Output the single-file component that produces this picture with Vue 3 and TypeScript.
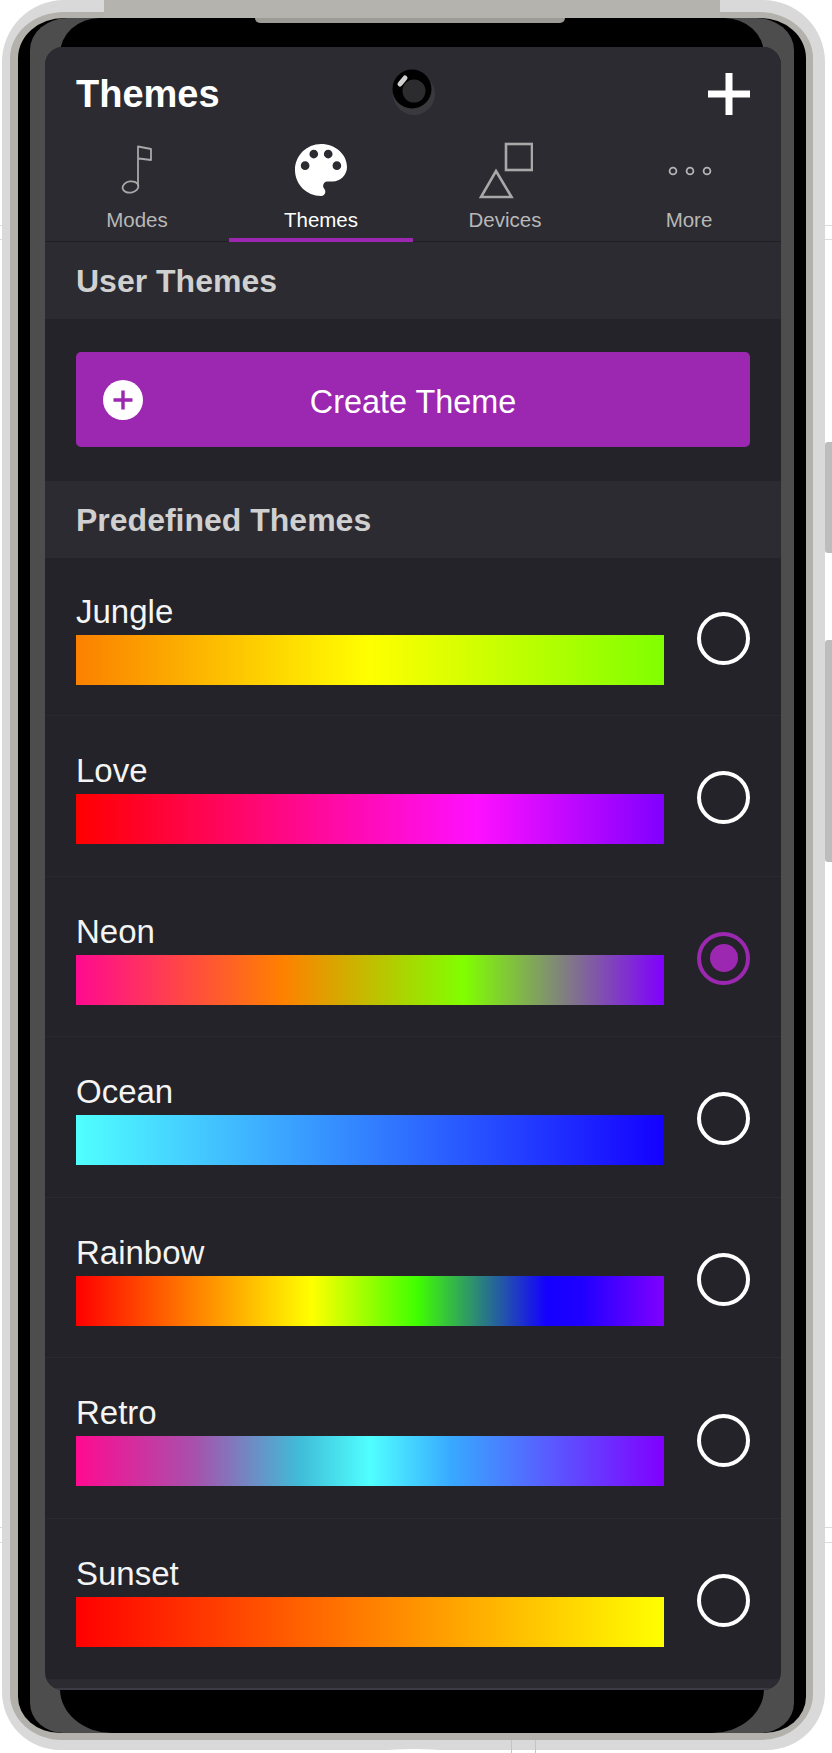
<script setup lang="ts">
interface Theme {
  name: string;
  gradient: string;
}

const tabs = ["Modes", "Themes", "Devices", "More"];
const activeTab = "Themes";
const selected = "Neon";

const themes: Theme[] = [
  { name: "Jungle", gradient: "linear-gradient(90deg, #fb8000, #ffff00 50%, #80ff00)" },
  { name: "Love", gradient: "linear-gradient(90deg, #ff0000, #ff10ff 68%, #8000ff)" },
  { name: "Neon", gradient: "linear-gradient(90deg, #ff0a90, #ff8000 35%, #80ff00 66%, #8000ff)" },
  { name: "Ocean", gradient: "linear-gradient(90deg, #50ffff, #1400ff)" },
  { name: "Rainbow", gradient: "linear-gradient(90deg, #ff0000, #ff8000 20%, #ffff00 40%, #40ff00 58%, #1400ff 80%, #1f00ff 86%, #8000ff)" },
  { name: "Retro", gradient: "linear-gradient(90deg, #ff0a90, #a850ac 20%, #40bcd8 38%, #50ffff 50%, #38a8ff 64%, #8000ff)" },
  { name: "Sunset", gradient: "linear-gradient(90deg, #ff0000, #ffff00)" },
];
</script>

<template>
  <div class="page">
    <i class="line" style="top: 225px"></i>
    <i class="line" style="top: 239px"></i>
    <i class="line" style="top: 1527px"></i>
    <i class="line" style="top: 1542px"></i>
    <i class="side-btn vol-up"></i>
    <i class="side-btn vol-down"></i>

    <div class="shell">
      <div class="band">
        <i class="top-bar"></i>
        <div class="bezel">
          <div class="rim">
            <i class="inner-black"></i>
            <main class="screen">
              <header class="top">
                <div class="title-row">
                  <h1>Themes</h1>
                  <svg class="add" width="42" height="42" viewBox="0 0 42 42">
                    <path d="M21 0V42M0 21H42" stroke="#fff" stroke-width="7" />
                  </svg>
                </div>
                <nav class="tabs">
                  <div v-for="tab in tabs" :key="tab" class="tab" :class="{ active: tab === activeTab }">
                    <div class="tab-icon">
                      <svg v-if="tab === 'Modes'" width="32" height="54" viewBox="0 0 32 54" fill="none" stroke="#a8a8a8" stroke-width="1.8">
                        <ellipse cx="9.5" cy="44" rx="8" ry="5.6" transform="rotate(-10 9.5 44)" />
                        <path d="M17 43V3.5L30 6V17L18 15.5" stroke-linejoin="round" />
                      </svg>
                      <svg v-else-if="tab === 'Themes'" width="52" height="52" viewBox="3 3 18 18" fill="#fff">
                        <path d="M12 3c-4.97 0-9 4.03-9 9s4.03 9 9 9c.83 0 1.5-.67 1.5-1.5 0-.39-.15-.74-.39-1.01-.23-.26-.38-.61-.38-.99 0-.83.67-1.5 1.5-1.5H16c2.76 0 5-2.24 5-5 0-4.42-4.03-8-9-8zm-5.5 9c-.83 0-1.5-.67-1.5-1.5S5.67 9 6.5 9 8 9.67 8 10.5 7.33 12 6.5 12zm3-4C8.67 8 8 7.33 8 6.5S8.67 5 9.5 5s1.5.67 1.5 1.5S10.33 8 9.5 8zm5 0c-.83 0-1.5-.67-1.5-1.5S13.67 5 14.5 5s1.5.67 1.5 1.5S15.33 8 14.5 8zm3 4c-.83 0-1.5-.67-1.5-1.5S16.67 9 17.5 9s1.5.67 1.5 1.5-.67 1.5-1.5 1.5z" />
                      </svg>
                      <svg v-else-if="tab === 'Devices'" width="56" height="58" viewBox="0 0 56 58" fill="none" stroke="#a8a8a8" stroke-width="2.6">
                        <rect x="29" y="3" width="26" height="26" />
                        <path d="M19 30L34.5 56H4Z" />
                      </svg>
                      <svg v-else class="dots" width="46" height="12" viewBox="0 0 46 12" fill="none" stroke="#b4b4b4" stroke-width="1.8">
                        <circle cx="6" cy="6" r="3.4" />
                        <circle cx="23" cy="6" r="3.4" />
                        <circle cx="40" cy="6" r="3.4" />
                      </svg>
                    </div>
                    <span>{{ tab }}</span>
                  </div>
                </nav>
              </header>

              <h2 class="section">User Themes</h2>
              <div class="create-wrap">
                <button class="create">
                  <svg width="40" height="40" viewBox="0 0 40 40">
                    <circle cx="20" cy="20" r="20" fill="#fff" />
                    <path d="M20 10.5V29.5M10.5 20H29.5" stroke="#9c27b0" stroke-width="3.4" />
                  </svg>
                  <span>Create Theme</span>
                </button>
              </div>

              <h2 class="section">Predefined Themes</h2>
              <ul class="themes">
                <li v-for="theme in themes" :key="theme.name">
                  <div class="info">
                    <span class="name">{{ theme.name }}</span>
                    <div class="bar" :style="{ background: theme.gradient }"></div>
                  </div>
                  <span class="radio" :class="{ on: theme.name === selected }"></span>
                </li>
              </ul>
              <footer class="strip"></footer>

              <svg class="camera" width="60" height="60" viewBox="0 0 60 60">
                <circle cx="32" cy="33" r="21" fill="#3a3a3e" />
                <circle cx="30" cy="28" r="19.5" fill="#000" />
                <circle cx="32" cy="30" r="11.5" fill="#2c2c2e" />
                <path d="M18 23L23 17" stroke="#d0d0d0" stroke-width="5" stroke-linecap="round" />
              </svg>
            </main>
          </div>
        </div>
        <i class="top-notch"></i>
      </div>
    </div>

    <i class="seam" style="left: 511px"></i>
    <i class="seam" style="left: 535px"></i>
    <i class="pill"></i>
  </div>
</template>

<style>
html,
body {
  margin: 0;
  background: #fff;
}
</style>

<style scoped>
.page {
  position: relative;
  width: 832px;
  height: 1753px;
  overflow: hidden;
  background: #fff;
  font-family: "Liberation Sans", Arial, sans-serif;
}

.line {
  position: absolute;
  left: 0;
  right: 0;
  height: 1px;
  background: #dcdcdc;
}

.side-btn {
  position: absolute;
  left: 825px;
  width: 7px;
  background: #bdbdbd;
  border-radius: 3px 0 0 3px;
}

.vol-up {
  top: 442px;
  height: 111px;
}

.vol-down {
  top: 640px;
  height: 222px;
}

.shell {
  position: relative;
  box-sizing: border-box;
  width: 823px;
  height: 1750px;
  margin-left: 2px;
  padding: 12px 12px 10px 8px;
  background: #d9d9d9;
  border-radius: 62px 62px 58px 58px;
}

.band {
  position: relative;
  height: 100%;
  box-sizing: border-box;
  padding: 6px 7px 7px 8px;
  background: #b3b1ab;
  border-radius: 54px 54px 52px 52px / 46px 46px 46px 46px;
}

.top-bar {
  position: absolute;
  left: 94px;
  width: 616px;
  top: -12px;
  height: 18px;
  background: #b5b3ae;
}

.top-notch {
  position: absolute;
  left: 245px;
  width: 310px;
  top: 6px;
  height: 5px;
  background: #9d9b96;
  border-radius: 0 0 10px 10px;
}

.bezel {
  position: relative;
  height: 100%;
  box-sizing: border-box;
  padding: 0 12px;
  background: #000;
  border-radius: 46px 46px 42px 42px / 40px 40px 36px 36px;
}

.rim {
  position: relative;
  height: 100%;
  box-sizing: border-box;
  padding: 29px 13px 43px 15px;
  background: #4d4d4d;
  border-radius: 38px 38px 34px 34px / 32px 32px 30px 30px;
}

.inner-black {
  position: absolute;
  left: 30px;
  right: 30px;
  top: 0;
  bottom: 0;
  background: #000;
  border-radius: 40px 40px 52px 52px / 36px 36px 44px 44px;
}

.screen {
  position: relative;
  display: flex;
  flex-direction: column;
  height: 100%;
  overflow: hidden;
  background: #232329;
  border-radius: 18px;
  color: #fff;
}

.top {
  background: #2b2b31;
}

.title-row {
  display: flex;
  align-items: center;
  justify-content: space-between;
  height: 60px;
  margin-top: 17px;
  margin-bottom: -1px;
  padding: 0 31px;
}

h1 {
  margin: 0;
  font-size: 38px;
  font-weight: 700;
}

.tabs {
  display: flex;
  height: 119px;
  box-sizing: border-box;
  border-bottom: 1px solid #1f1f24;
}

.tab {
  position: relative;
  flex: 1;
  display: flex;
  flex-direction: column;
  align-items: center;
  padding-top: 19px;
  font-size: 20.5px;
  color: #b8b8b8;
}

.tab.active {
  color: #fff;
}

.tab.active::after {
  content: "";
  position: absolute;
  left: 0;
  right: 0;
  bottom: -1px;
  height: 4px;
  background: #9c27b0;
}

.tab-icon {
  display: flex;
  align-items: center;
  justify-content: center;
  height: 56px;
  margin-bottom: 10px;
}

.dots {
  margin: 2px 0 0 2px;
}

.tab span {
  line-height: 24px;
}

.section {
  display: flex;
  align-items: center;
  box-sizing: border-box;
  height: 77px;
  margin: 0;
  padding: 2px 31px 0;
  background: #2b2b31;
  color: #d0d0d0;
  font-size: 32px;
  font-weight: 700;
}

.create-wrap {
  padding: 33px 31px 34px;
}

.create {
  display: grid;
  grid-template-columns: 1fr auto 1fr;
  align-items: center;
  width: 100%;
  height: 95px;
  padding: 0 27px;
  border: 0;
  border-radius: 5px;
  background: #9c27b0;
  color: #fff;
  font: 32.4px "Liberation Sans", Arial, sans-serif;
}

.create span {
  padding-top: 5px;
}

.themes {
  margin: 0;
  padding: 0;
  list-style: none;
}

.themes li {
  display: flex;
  align-items: center;
  justify-content: space-between;
  box-sizing: border-box;
  height: 160.6px;
  padding: 0 31px;
  border-bottom: 1px solid #2a2a30;
}

.themes li:first-child {
  height: 158px;
}

.info {
  align-self: flex-end;
  display: flex;
  flex-direction: column;
  width: 588px;
  padding-bottom: 31.5px;
}

li:first-child .info {
  padding-bottom: 30px;
}

.name {
  margin-bottom: 4px;
  font-size: 33px;
  line-height: 38px;
  color: #f4f4f4;
}

.bar {
  height: 50px;
}

.radio {
  display: flex;
  align-items: center;
  justify-content: center;
  box-sizing: border-box;
  width: 53px;
  height: 53px;
  margin-top: 4px;
  border: 4.5px solid #fff;
  border-radius: 50%;
}

.radio.on {
  border-color: #9c27b0;
}

.radio.on::after {
  content: "";
  width: 28px;
  height: 28px;
  border-radius: 50%;
  background: #9c27b0;
}

.strip {
  flex: 1;
  box-sizing: border-box;
  background: #2b2b31;
  border-bottom: 2px solid #3c3c44;
}

.camera {
  position: absolute;
  left: 337px;
  top: 14px;
}

.seam {
  position: absolute;
  top: 1740px;
  height: 13px;
  width: 1px;
  background: #c4c4c4;
}

.pill {
  position: absolute;
  left: 368px;
  top: 1749px;
  width: 92px;
  height: 12px;
  border-radius: 50%;
  background: #fff;
}
</style>
